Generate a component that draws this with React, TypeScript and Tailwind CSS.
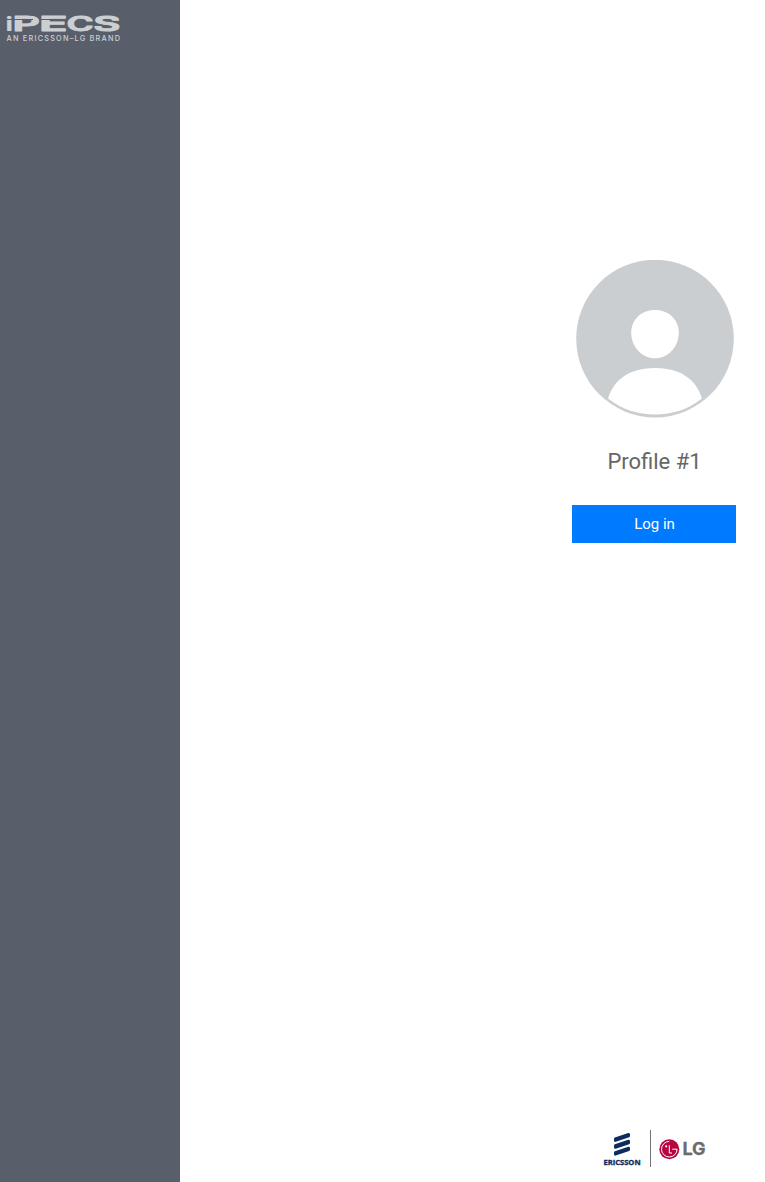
function BrandLogo() {
  return (
    <svg className="block h-[36px] w-[128px]" viewBox="0 0 128 36" role="img" aria-label="iPECS">
      <g fill="#cccfd2" fontFamily="Inter, 'Open Sans', sans-serif">
        <g transform="translate(0 22.6)" fontSize="20.2" fontWeight="600" stroke="#cccfd2" strokeWidth="0.9" strokeLinejoin="round">
          <text x="5.4" y="0" fontSize="20" strokeWidth="0.2" fontWeight="700" textLength="7.4" lengthAdjust="spacingAndGlyphs">i</text>
          <text x="12.6" y="0" textLength="27.4" lengthAdjust="spacingAndGlyphs">P</text>
          <text x="39" y="0" textLength="28.6" lengthAdjust="spacingAndGlyphs">E</text>
          <text x="66.6" y="0" textLength="27.2" lengthAdjust="spacingAndGlyphs">C</text>
          <text x="93.2" y="0" textLength="27.2" lengthAdjust="spacingAndGlyphs">S</text>
        </g>
        <path d="M13 11.5H33M41 11.5H67" stroke="#585e6a" strokeWidth="1" />
        <text x="6.5" y="32.8" fontSize="7.3" fontWeight="500" textLength="113.5" lengthAdjust="spacing">
          AN ERICSSON–LG BRAND
        </text>
      </g>
    </svg>
  );
}

function Avatar() {
  return (
    <svg className="block size-[158px]" viewBox="0 0 158 158" aria-hidden="true">
      <circle cx="79" cy="78.6" r="78.8" fill="#cbced1" />
      <path
        d="M79 50C93 50 102.8 60 102.8 72.5C102.8 87 92 98.3 79 98.3S55.2 87 55.2 72.5C55.2 60 65 50 79 50Z"
        fill="#fff"
      />
      <path d="M32 138.5C38 119 54 108 79 108S120 119 125.9 138.5C112 149.5 96 154.5 79 154.5S46 149.5 32 138.5Z" fill="#fff" />
    </svg>
  );
}

function EricssonLogo() {
  return (
    <svg className="block h-[38px] w-[38px]" viewBox="0 0 38 38" role="img" aria-label="Ericsson">
      <g fill="#0d2c60" stroke="#0d2c60" strokeWidth="2.6" strokeLinejoin="round">
        <path d="M12.3 9.8L25.7 5.3V7.1L12.3 11.6Z" />
        <path d="M12.3 16.6L25.7 12.1V13.9L12.3 18.4Z" />
        <path d="M12.3 23.5L25.7 19V20.8L12.3 25.3Z" />
      </g>
      <text
        x="0.4"
        y="36"
        fill="#0d2c60"
        stroke="#0d2c60"
        strokeWidth="0.35"
        fontFamily="'Open Sans', sans-serif"
        fontSize="7.6"
        fontWeight="700"
        textLength="37.2"
        lengthAdjust="spacingAndGlyphs"
      >
        ERICSSON
      </text>
    </svg>
  );
}

function LgLogo() {
  return (
    <svg className="block h-[38px] w-[50px]" viewBox="0 0 50 38" role="img" aria-label="LG">
      <circle cx="10.3" cy="20.2" r="10" fill="#b8053f" />
      <g fill="none" stroke="#fff" strokeWidth="1">
        <path d="M10.3 12.4A7.8 7.8 0 1 0 18.1 20.2H13.2" />
        <path d="M10.3 16.2V24H13" />
      </g>
      <circle cx="7.2" cy="17.3" r="1.1" fill="#fff" />
      <text
        x="23.4"
        y="26.4"
        fill="#6b6b6b"
        stroke="#6b6b6b"
        strokeWidth="0.3"
        fontFamily="Inter, sans-serif"
        fontSize="17.6"
        fontWeight="700"
        textLength="23.2"
        lengthAdjust="spacingAndGlyphs"
      >
        LG
      </text>
    </svg>
  );
}

export default function App() {
  return (
    <div className="flex h-[1182px] w-full overflow-hidden bg-white font-['Roboto',sans-serif]">
      <aside className="w-[180px] shrink-0 bg-[#585e6a] pt-2">
        <BrandLogo />
      </aside>
      <main className="flex flex-1 justify-end pr-[29px]">
        <div className="flex w-[164px] flex-col items-center pt-[260px]">
          <div className="ml-0.5">
            <Avatar />
          </div>
          <h1 className="mt-[28px] ml-px text-[22px] leading-8 font-normal whitespace-nowrap text-[#666]">Profile #1</h1>
          <button className="mt-[27px] h-[38px] w-full bg-[#007aff] pl-px text-[15px] leading-[38px] text-white">Log in</button>
          <footer className="mt-auto mb-[15px] ml-1 flex items-center">
            <EricssonLogo />
            <div className="mr-2 ml-[9px] h-[37px] w-px bg-[#727272]" />
            <LgLogo />
          </footer>
        </div>
      </main>
    </div>
  );
}
